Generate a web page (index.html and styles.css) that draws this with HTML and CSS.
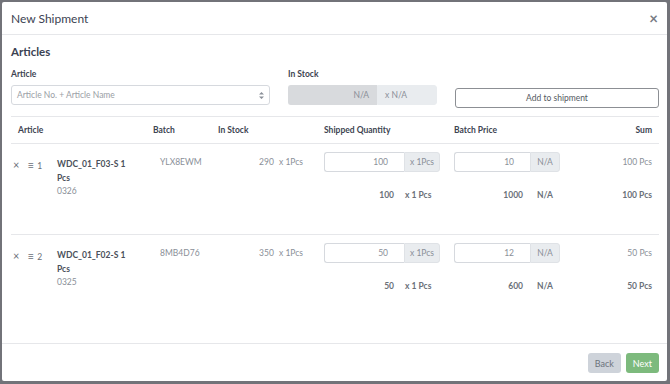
FILE: index.html
```html
<!DOCTYPE html>
<html lang="en">
<head>
    <meta charset="UTF-8">
    <meta name="viewport" content="width=device-width, initial-scale=1.0">
    <title>New Shipment</title>
    <link rel="stylesheet" href="styles.css">
</head>
<body>
    <div class="modal">
        <div class="modal-header">
            <h1>New Shipment</h1>
            <span class="close">&times;</span>
        </div>

        <div class="modal-body">
            <h2>Articles</h2>

            <div class="form-row">
                <div class="field">
                    <label>Article</label>
                    <div class="select">
                        <span>Article No. + Article Name</span>
                        <svg width="5" height="7" viewBox="0 0 5 7"><path d="M2.5 0 L5 2.6 L0 2.6 Z M2.5 7 L5 4.4 L0 4.4 Z" fill="#8a8f98"/></svg>
                    </div>
                </div>
                <div class="field">
                    <label>In Stock</label>
                    <div class="group">
                        <span class="group-input disabled">N/A</span>
                        <span class="group-append wide">x N/A</span>
                    </div>
                </div>
                <div class="field">
                    <label>&nbsp;</label>
                    <button class="btn-outline">Add to shipment</button>
                </div>
            </div>

            <div class="table">
                <div class="thead">
                    <div class="th span2">Article</div>
                    <div class="th">Batch</div>
                    <div class="th">In Stock</div>
                    <div class="th">Shipped Quantity</div>
                    <div class="th">Batch Price</div>
                    <div class="th right">Sum</div>
                </div>

                <div class="tr">
                    <div class="td control">
                        <span class="remove">&times;</span>
                        <span class="drag">&#8801;</span>
                        <span>1</span>
                    </div>
                    <div class="td article">
                        <div class="name">WDC_01_F03-S 1 Pcs</div>
                        <div class="code">0326</div>
                    </div>
                    <div class="td batch">YLX8EWM</div>
                    <div class="td stock">290 <span class="unit">x 1Pcs</span></div>
                    <div class="td">
                        <div class="group qty">
                            <span class="group-input">100</span>
                            <span class="group-append">x 1Pcs</span>
                        </div>
                        <div class="total qty-total"><b>100</b><b class="u">x 1 Pcs</b></div>
                    </div>
                    <div class="td">
                        <div class="group price">
                            <span class="group-input">10</span>
                            <span class="group-append">N/A</span>
                        </div>
                        <div class="total price-total"><b>1000</b><b class="u">N/A</b></div>
                    </div>
                    <div class="td sum">
                        <div class="sum-value">100 Pcs</div>
                        <div class="total"><b>100 Pcs</b></div>
                    </div>
                </div>

                <div class="tr last">
                    <div class="td control">
                        <span class="remove">&times;</span>
                        <span class="drag">&#8801;</span>
                        <span>2</span>
                    </div>
                    <div class="td article">
                        <div class="name">WDC_01_F02-S 1 Pcs</div>
                        <div class="code">0325</div>
                    </div>
                    <div class="td batch">8MB4D76</div>
                    <div class="td stock">350 <span class="unit">x 1Pcs</span></div>
                    <div class="td">
                        <div class="group qty">
                            <span class="group-input">50</span>
                            <span class="group-append">x 1Pcs</span>
                        </div>
                        <div class="total qty-total"><b>50</b><b class="u">x 1 Pcs</b></div>
                    </div>
                    <div class="td">
                        <div class="group price">
                            <span class="group-input">12</span>
                            <span class="group-append">N/A</span>
                        </div>
                        <div class="total price-total"><b>600</b><b class="u">N/A</b></div>
                    </div>
                    <div class="td sum">
                        <div class="sum-value">50 Pcs</div>
                        <div class="total"><b>50 Pcs</b></div>
                    </div>
                </div>
            </div>
        </div>

        <div class="modal-footer">
            <button class="btn btn-back">Back</button>
            <button class="btn btn-next">Next</button>
        </div>
    </div>
</body>
</html>
```

FILE: styles.css
```css
body {
    margin: 0;
    height: 384px;
    background: #727379;
    font-family: Lato, "Open Sans", sans-serif;
    color: #3d4451;
    overflow: hidden;
}
.modal {
    margin: 2px 3px 3px 2px;
    height: 379px;
    background: #fff;
    border-radius: 2px;
    display: flex;
    flex-direction: column;
}
.modal-header {
    height: 32px;
    border-bottom: 1px solid #e6e7ea;
    display: flex;
    align-items: center;
    justify-content: space-between;
    padding: 0 9px;
}
.modal-header h1 {
    margin: 0;
    font-size: 12px;
    font-weight: normal;
    color: #3b4252;
}
.close {
    font-size: 15px;
    font-weight: bold;
    color: #777b83;
    line-height: 1;
}
.modal-body {
    flex: 1;
    padding: 10px 8px 0 9px;
}
h2 {
    margin: 0;
    font-size: 11.5px;
    line-height: 14px;
    font-weight: bold;
    color: #3b4252;
}
.form-row {
    display: grid;
    grid-template-columns: 259px 149px 204px;
    column-gap: 18px;
    margin-top: 9px;
    padding-bottom: 8px;
    border-bottom: 1px solid #e6e7ea;
}
.field label {
    display: block;
    font-size: 8.5px;
    font-weight: bold;
    line-height: 12px;
    margin-bottom: 5px;
}
.select {
    height: 18px;
    border: 1px solid #d6d9de;
    border-radius: 3px;
    display: flex;
    align-items: center;
    justify-content: space-between;
    padding: 0 5px;
    font-size: 8.5px;
    color: #9a9ea5;
}
.group {
    display: flex;
    height: 20px;
    font-size: 8.5px;
    color: #8a8f98;
}
.group-input {
    flex: 1;
    box-sizing: border-box;
    border: 1px solid #d6d9de;
    border-right: none;
    border-radius: 3px 0 0 3px;
    display: flex;
    align-items: center;
    justify-content: flex-end;
    padding-right: 16px;
}
.group-input.disabled {
    background: #d8dadd;
    border-color: #d8dadd;
    padding-right: 8px;
}
.group-append {
    box-sizing: border-box;
    background: #e9ecef;
    border: 1px solid #dfe2e6;
    border-radius: 0 3px 3px 0;
    display: flex;
    align-items: center;
    justify-content: center;
}
.group-append.wide {
    width: 60px;
    justify-content: flex-start;
    padding-left: 7px;
    border-color: #e9ecef;
}
.btn-outline {
    width: 100%;
    height: 20px;
    background: #fff;
    border: 1px solid #8c8f94;
    border-radius: 3px;
    font-family: inherit;
    font-size: 8.5px;
    color: #555a62;
}
.thead, .tr {
    display: grid;
    grid-template-columns: 46px 96px 65px 106px 130px 130px 1fr;
}
.thead {
    height: 26px;
    align-items: center;
    border-bottom: 1px solid #e6e7ea;
    font-size: 8.5px;
    font-weight: bold;
}
.th.span2 {
    grid-column: span 2;
    padding-left: 7px;
}
.right {
    text-align: right;
    padding-right: 7px;
}
.tr {
    height: 90px;
    border-bottom: 1px solid #e6e7ea;
    font-size: 8.5px;
    color: #8a8f98;
}
.tr.last {
    border-bottom: none;
}
.td {
    padding-top: 8px;
}
.control {
    padding-top: 14px;
    line-height: 13.5px;
    color: #6b6f78;
    padding-left: 2px;
}
.remove {
    font-size: 11px;
    margin-right: 6px;
}
.drag {
    font-size: 11px;
    margin-right: 1px;
}
.article {
    padding-top: 14px;
    line-height: 13.5px;
}
.article .name {
    font-weight: bold;
    color: #4a505a;
    width: 72px;
}
.batch {
    padding-left: 7px;
    line-height: 20px;
}
.stock {
    text-align: right;
    padding-right: 21px;
    line-height: 20px;
}
.stock .unit {
    margin-left: 3px;
}
.group.qty {
    width: 116px;
}
.group.qty .group-append {
    width: 36px;
}
.group.price {
    width: 106px;
}
.group.price .group-append {
    width: 30px;
}
.total {
    margin-top: 16px;
    line-height: 14px;
    color: #6a7079;
}
.total b {
    display: inline-block;
}
.qty-total b:first-child {
    width: 70px;
    text-align: right;
}
.qty-total .u {
    margin-left: 11px;
}
.price-total b:first-child {
    width: 69px;
    text-align: right;
}
.price-total .u {
    margin-left: 14px;
}
.sum {
    text-align: right;
    padding-right: 7px;
}
.sum-value {
    line-height: 20px;
}
.modal-footer {
    border-top: 1px solid #e6e7ea;
    padding: 9px 8px 8px;
    display: flex;
    justify-content: flex-end;
    gap: 5px;
}
.btn {
    height: 20px;
    border: none;
    border-radius: 3px;
    font-family: inherit;
    font-size: 9px;
    padding: 0 7px;
}
.btn-back {
    background: #ced3da;
    color: #6c727b;
}
.btn-next {
    background: #7dba7d;
    color: #fff;
}
```
